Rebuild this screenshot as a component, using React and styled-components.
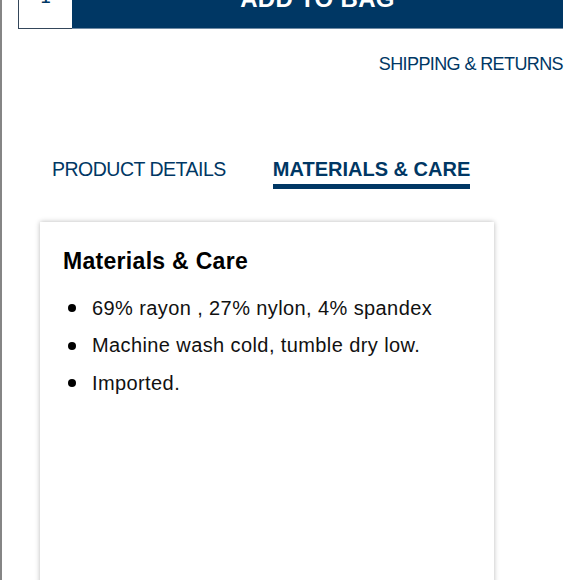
import React, { useState } from "react";
import styled, { createGlobalStyle } from "styled-components";

const NAVY = "#003764";

const GlobalStyle = createGlobalStyle`
  html, body {
    margin: 0;
    padding: 0;
    background: #fff;
    overflow: hidden;
  }
  body {
    font-family: "Liberation Sans", Arial, sans-serif;
  }
  * {
    box-sizing: border-box;
  }
`;

const Page = styled.div`
  min-height: 100vh;
  border-left: 2px solid #858585;
`;

const BuyRow = styled.div`
  display: flex;
  height: 60px;
  margin: -31px 17px 0 16px;
`;

const QtyBox = styled.div`
  width: 54px;
  display: flex;
  align-items: flex-end;
  justify-content: center;
  padding-bottom: 22px;
  border: 1px solid #34465a;
  border-right: none;
  background: #fff;
  color: ${NAVY};
  font-family: "DejaVu Sans", sans-serif;
  font-size: 19px;
  line-height: 1;
`;

const AddButton = styled.button`
  flex: 1;
  border: none;
  border-bottom: 1px solid #6f8aa4;
  background: ${NAVY};
  color: #fff;
  font-family: "Liberation Sans", Arial, sans-serif;
  font-weight: 700;
  font-size: 24px;
  letter-spacing: 0.3px;
  padding: 0;
  cursor: pointer;
`;

const LinkRow = styled.div`
  display: flex;
  justify-content: flex-end;
  padding-right: 17px;
  margin-top: 23.5px;
`;

const ShipLink = styled.a`
  color: ${NAVY};
  font-size: 18px;
  line-height: 22px;
  letter-spacing: -0.6px;
  text-decoration: none;
`;

const Tabs = styled.div`
  display: flex;
  align-items: flex-start;
  gap: 47px;
  padding-left: 50px;
  margin-top: 82.5px;
`;

const Tab = styled.button`
  border: none;
  background: none;
  padding: 0 0 3px;
  margin: 0;
  color: ${NAVY};
  font-family: "Liberation Sans", Arial, sans-serif;
  font-size: ${(p) => (p.$active ? "20px" : "19.5px")};
  font-weight: ${(p) => (p.$active ? 700 : 400)};
  letter-spacing: ${(p) => (p.$active ? "0px" : "-0.5px")};
  line-height: 24px;
  border-bottom: 5px solid ${(p) => (p.$active ? NAVY : "transparent")};
  cursor: pointer;
`;

const Card = styled.section`
  margin: 33px 0 0 38px;
  width: 454px;
  min-height: 420px;
  padding: 26px 23px 25px;
  background: #fff;
  box-shadow: 0 0 5px rgba(0, 0, 0, 0.28);
`;

const CardTitle = styled.h3`
  margin: 0;
  font-size: 23px;
  line-height: 26px;
  font-weight: 700;
  letter-spacing: 0.3px;
  color: #000;
`;

const List = styled.ul`
  list-style: none;
  margin: 21.5px 0 0;
  padding: 0;
  display: flex;
  flex-direction: column;
  gap: 13.5px;
`;

const Item = styled.li`
  display: flex;
  align-items: center;
  gap: 16px;
  padding-left: 5px;
  font-size: 20px;
  line-height: 24px;
  letter-spacing: 0.4px;
  color: #111;
`;

const Dot = styled.span`
  width: 8px;
  height: 8px;
  border-radius: 50%;
  background: #000;
  flex-shrink: 0;
  margin-top: 1px;
`;

const tabs = [
  { id: "details", label: "PRODUCT DETAILS" },
  { id: "care", label: "MATERIALS & CARE" },
];

const careItems = [
  "69% rayon , 27% nylon, 4% spandex",
  "Machine wash cold, tumble dry low.",
  "Imported.",
];

export default function App() {
  const [active, setActive] = useState("care");

  return (
    <Page>
      <GlobalStyle />
      <BuyRow>
        <QtyBox>1</QtyBox>
        <AddButton>ADD TO BAG</AddButton>
      </BuyRow>

      <LinkRow>
        <ShipLink href="#">SHIPPING &amp; RETURNS</ShipLink>
      </LinkRow>

      <Tabs>
        {tabs.map((t) => (
          <Tab key={t.id} $active={active === t.id} onClick={() => setActive(t.id)}>
            {t.label}
          </Tab>
        ))}
      </Tabs>

      <Card>
        <CardTitle>Materials &amp; Care</CardTitle>
        <List>
          {careItems.map((text) => (
            <Item key={text}>
              <Dot />
              {text}
            </Item>
          ))}
        </List>
      </Card>
    </Page>
  );
}
